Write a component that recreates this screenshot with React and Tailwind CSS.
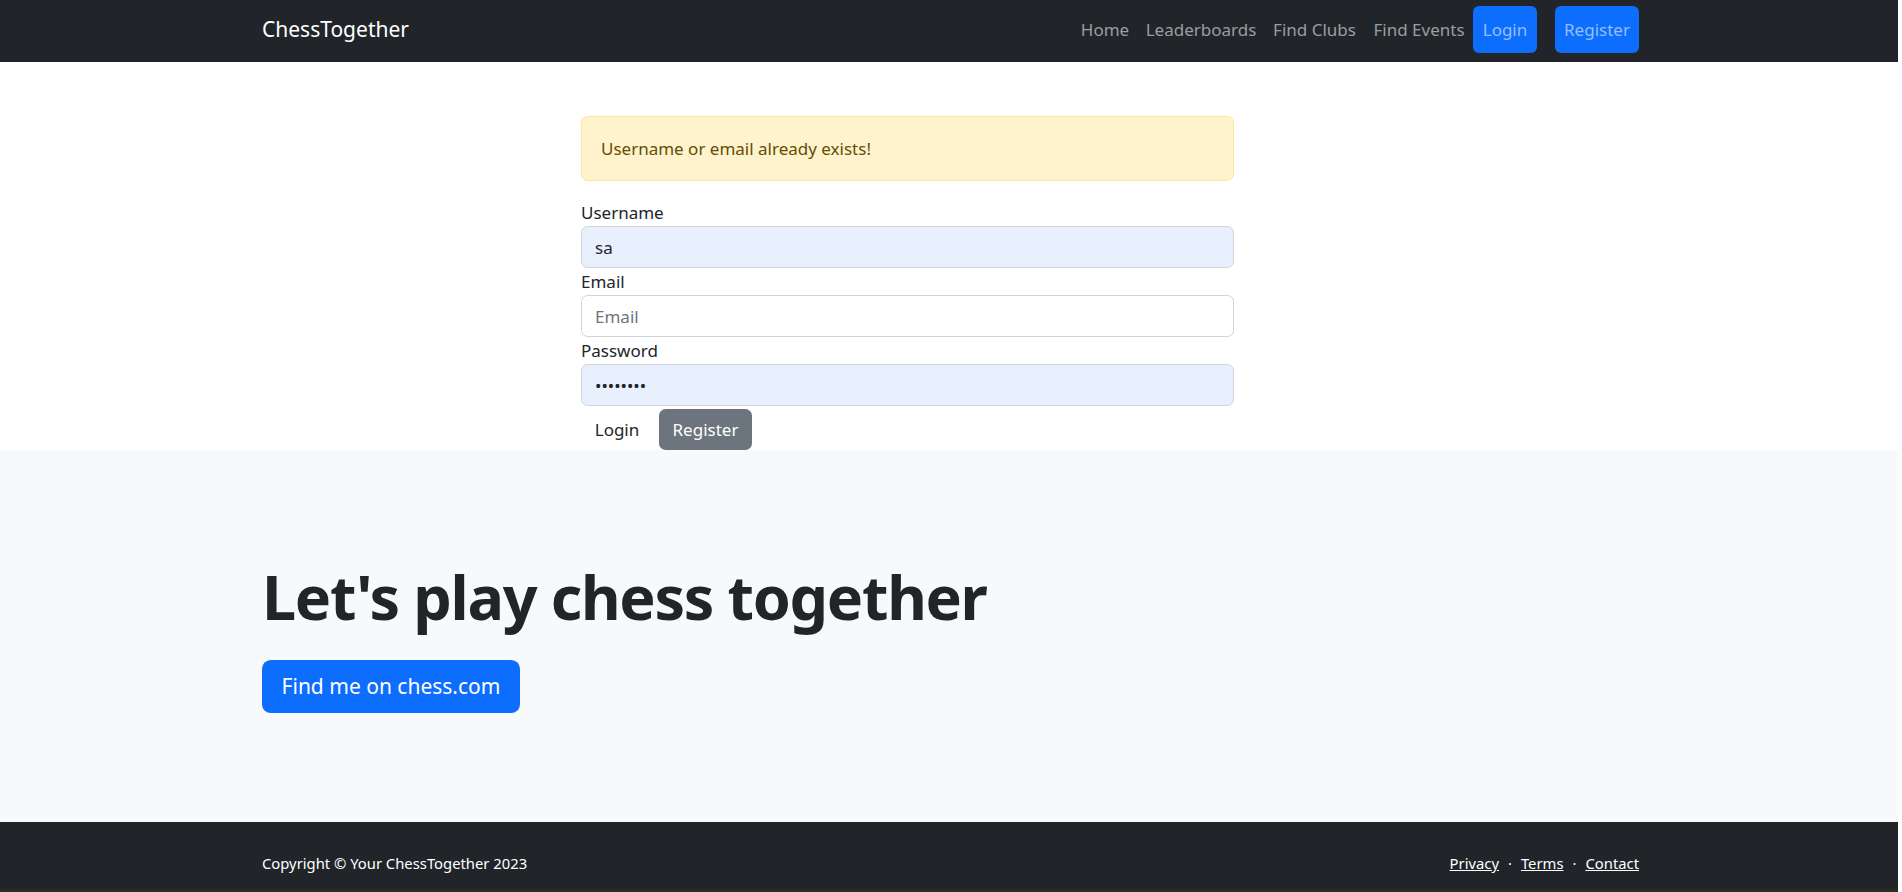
import { useState } from "react";

const font = { fontFamily: '"Noto Sans", "Open Sans", sans-serif' };

export default function App() {
  return (
    <div className="w-[1898px] min-h-[892px] bg-white text-[#212529]" style={font}>
      <Navbar />
      <RegisterForm />
      <Hero />
      <Footer />
      <div className="h-[4px] bg-[#2a2e20]" />
    </div>
  );
}

function Navbar() {
  const links = [
    { label: "Home", w: "w-[66px]" },
    { label: "Leaderboards", w: "w-[126px]" },
    { label: "Find Clubs", w: "w-[101px]" },
    { label: "Find Events", w: "w-[108px]" },
  ];

  return (
    <nav className="h-[62px] bg-[#212529]">
      <div className="ml-[262px] w-[1377px] h-full flex items-center justify-between">
        <a href="#" className="text-[21px] text-white leading-none pb-[4px]">
          ChessTogether
        </a>
        <ul className="flex items-center h-full pb-[3px]">
          {links.map((link) => (
            <li key={link.label} className={link.w}>
              <a href="#" className="block text-center text-[17px] text-[#9b9d9f] leading-[26px]">
                {link.label}
              </a>
            </li>
          ))}
          <li className="w-[64px] h-[47px] rounded-[6px] bg-[#0d6efd] flex items-center justify-center">
            <a href="#" className="text-[17px] text-[#92bffe]">Login</a>
          </li>
          <li className="ml-[18px] w-[84px] h-[47px] rounded-[6px] bg-[#0d6efd] flex items-center justify-center">
            <a href="#" className="text-[17px] text-[#92bffe]">Register</a>
          </li>
        </ul>
      </div>
    </nav>
  );
}

function Field({ label, type, value, placeholder, autofill }) {
  const [val, setVal] = useState(value || "");
  return (
    <div>
      <label className="block h-[27px] text-[17px] leading-[27px]">{label}</label>
      <input
        type={type}
        value={val}
        placeholder={placeholder}
        onChange={(e) => setVal(e.target.value)}
        className={
          "block w-full h-[42px] px-[13px] rounded-[6.6px] border border-[#ced4da] text-[17px] text-[#212529] placeholder:text-[#6c757d] outline-none " +
          (autofill ? "bg-[#e8f0fe]" : "bg-white")
        }
        style={font}
      />
    </div>
  );
}

function RegisterForm() {
  return (
    <section className="pt-[54px]">
      <div className="ml-[581px] w-[653px]">
        <div className="h-[65px] mb-[18px] px-[19px] flex items-center rounded-[6.6px] border border-[#ffe69c] bg-[#fff3cd] text-[#664d03] text-[17px]">
          Username or email already exists!
        </div>
        <Field label="Username" type="text" value="sa" autofill />
        <Field label="Email" type="email" placeholder="Email" />
        <Field label="Password" type="password" value="password" autofill />
        <div className="flex items-center mt-[3px]">
          <button className="w-[72px] h-[41px] text-[17px] text-[#212529]" style={font}>
            Login
          </button>
          <button className="ml-[6px] w-[93px] h-[41px] rounded-[6.6px] bg-[#6c757d] text-white text-[17px]" style={font}>
            Register
          </button>
        </div>
      </div>
    </section>
  );
}

function Hero() {
  return (
    <section className="bg-[#f8f9fa] pt-[110px] pb-[109px]">
      <div className="ml-[262px] w-[1377px]">
        <h1 className="text-[61px] font-bold leading-[1.2] text-[#212529] tracking-[-1.3px]">
          Let's play chess together
        </h1>
        <a
          href="#"
          className="mt-[27px] inline-flex items-center justify-center w-[258px] h-[53px] rounded-[8.8px] bg-[#0d6efd] text-white text-[21px]"
        >
          Find me on chess.com
        </a>
      </div>
    </section>
  );
}

function Footer() {
  return (
    <footer className="h-[67px] bg-[#212529] pt-[30px]">
      <div className="ml-[262px] w-[1377px] flex items-center justify-between text-[14.8px] leading-[22px] text-white">
        <div>Copyright © Your ChessTogether 2023</div>
        <div className="flex items-center">
          <a href="#" className="underline">Privacy</a>
          <span className="mx-[9px]">·</span>
          <a href="#" className="underline">Terms</a>
          <span className="mx-[9px]">·</span>
          <a href="#" className="underline">Contact</a>
        </div>
      </div>
    </footer>
  );
}
